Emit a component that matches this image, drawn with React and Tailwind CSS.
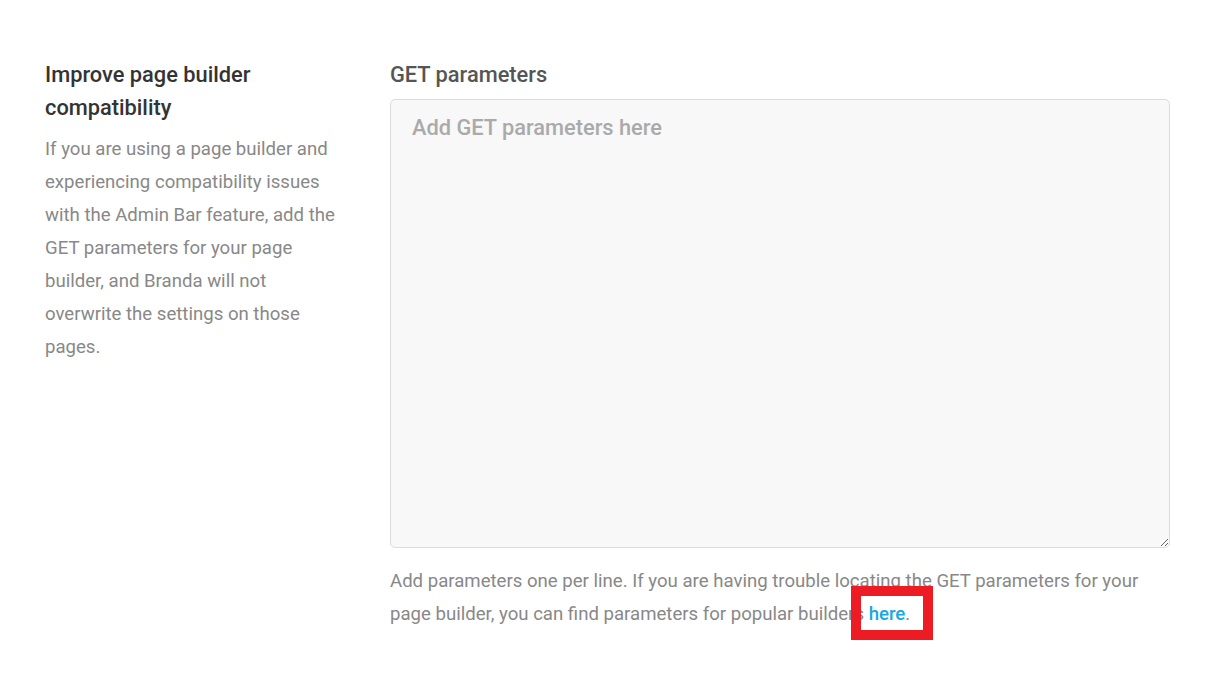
import React from 'react';

const App = () => {
  return (
    <div className="min-h-[682px] w-[1220px] bg-white font-['Roboto',sans-serif] antialiased">
      <div className="flex pl-[45px] pr-[50px] pt-[58px]">
        {/* Left description */}
        <div className="w-[300px] shrink-0">
          <h3 className="text-[21.8px] font-medium leading-[33px] text-[#333]">
            Improve page builder compatibility
          </h3>
          <p className="mt-[9px] text-[18.6px] leading-[33px] text-[#888]">
            If you are using a page builder and experiencing compatibility issues with the Admin Bar
            feature, add the GET parameters for your page builder, and Branda will not overwrite the
            settings on those pages.
          </p>
        </div>

        {/* Right field */}
        <div className="ml-[45px] flex-1">
          <label className="block text-[21.8px] font-medium leading-[33px] text-[#555]">
            GET parameters
          </label>
          <textarea
            placeholder="Add GET parameters here"
            className="mt-[8px] block h-[449px] w-full resize-y rounded-[5px] border border-[#ddd] bg-[#f8f8f8] px-[21px] py-[11px] text-[21.8px] font-medium leading-[33px] text-[#333] outline-none placeholder:text-[#aaa]"
          />
          <p className="relative mt-[17px] text-[18.6px] leading-[33px] text-[#888]">
            Add parameters one per line. If you are having trouble locating the GET parameters for
            your page builder, you can find parameters for popular builders{' '}
            <a href="#" className="font-medium text-[#17a8e3]">
              here
            </a>
            .
            {/* annotation box */}
            <span className="pointer-events-none absolute left-[461px] top-[21px] h-[54px] w-[82px] border-[10px] border-[#ed1c24]" />
          </p>
        </div>
      </div>
    </div>
  );
};

export default App;
